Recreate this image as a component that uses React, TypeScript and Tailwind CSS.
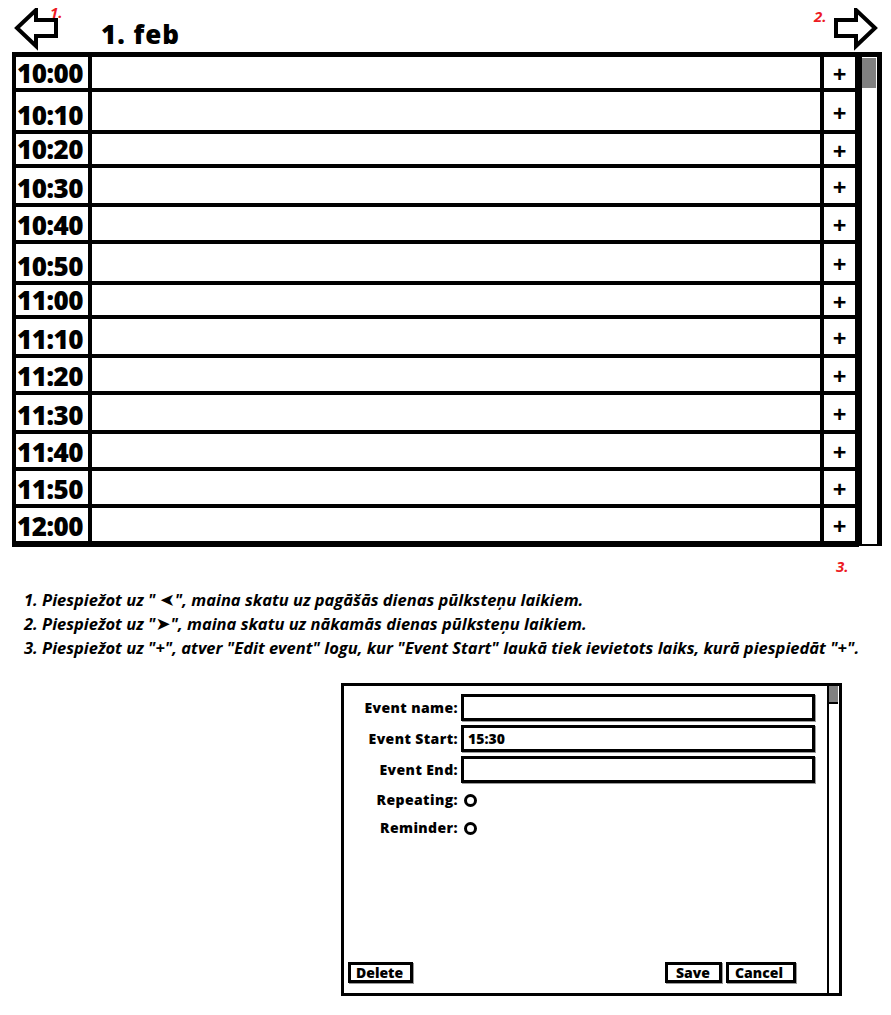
import React from 'react';

const rows: { time: string; h: string }[] = [
  { time: '10:00', h: 'h-[35px]' },
  { time: '10:10', h: 'h-[42px]' },
  { time: '10:20', h: 'h-[34px]' },
  { time: '10:30', h: 'h-[39px]' },
  { time: '10:40', h: 'h-[37px]' },
  { time: '10:50', h: 'h-[41px]' },
  { time: '11:00', h: 'h-[34px]' },
  { time: '11:10', h: 'h-[39px]' },
  { time: '11:20', h: 'h-[37px]' },
  { time: '11:30', h: 'h-[39px]' },
  { time: '11:40', h: 'h-[37px]' },
  { time: '11:50', h: 'h-[37px]' },
  { time: '12:00', h: 'h-[33px]' },
];

const sans = "font-['Open_Sans',sans-serif]";

function LeftArrow() {
  return (
    <svg width="48" height="44" viewBox="0 0 48 44" className="shrink-0">
      <polygon
        points="4,20 23,2 23,12 43,12 43,28 23,28 23,38"
        fill="white"
        stroke="black"
        strokeWidth="4"
        strokeLinejoin="miter"
      />
    </svg>
  );
}

function RightArrow() {
  return (
    <svg width="48" height="44" viewBox="0 0 48 44" className="shrink-0">
      <polygon
        points="44,20 25,2 25,12 5,12 5,28 25,28 25,38"
        fill="white"
        stroke="black"
        strokeWidth="4"
        strokeLinejoin="miter"
      />
    </svg>
  );
}

function Red({ children, className }: { children: React.ReactNode; className: string }) {
  return (
    <span className={`absolute text-[15px] font-bold italic leading-none text-[#ed1c24] ${sans} ${className}`}>
      {children}
    </span>
  );
}

function Field({ label, value }: { label: string; value?: string }) {
  return (
    <div className="flex items-center">
      <span className="w-[114px] text-right text-[14px] font-extrabold tracking-[0.4px] text-black">{label}</span>
      <div className="ml-[3px] flex h-[27px] w-[354px] items-center border-[3px] border-black pl-[4px] text-[14px] font-extrabold shadow-[1px_1px_0_#9a9a9a]">
        {value}
      </div>
    </div>
  );
}

function Radio({ label }: { label: string }) {
  return (
    <div className="flex h-[20px] items-center">
      <span className="w-[114px] text-right text-[14px] font-extrabold tracking-[0.4px] text-black">{label}</span>
      <span className="ml-[6px] mt-[2px] h-[13px] w-[13px] rounded-full border-[3px] border-black" />
    </div>
  );
}

function Btn({ label, w }: { label: string; w: string }) {
  return (
    <div className={`flex h-[21px] items-center border-[3px] border-black pl-[5px] text-[14px] font-extrabold leading-none shadow-[1px_1px_0_#9a9a9a] ${w}`}>
      {label}
    </div>
  );
}

export default function App() {
  return (
    <div className={`relative min-h-[1015px] w-[891px] bg-white text-black ${sans}`}>
      {/* header */}
      <div className="relative flex h-[52px] items-start pt-[8px]">
        <div className="ml-[13px]">
          <LeftArrow />
        </div>
        <h1 className="ml-[40px] mt-[13px] text-[26px] font-extrabold leading-none tracking-[1px]">1. feb</h1>
        <div className="ml-auto mr-[12px]">
          <RightArrow />
        </div>
        <Red className="left-[50px] top-[5px]">1.</Red>
        <Red className="left-[814px] top-[9px]">2.</Red>
      </div>

      {/* day table */}
      <div className="relative ml-[12px] flex w-[870px] items-start">
        <div className="flex-1 border-t-[5px] border-b-[6px] border-l-4 border-r-4 border-black">
          {rows.map((r, i) => (
            <div
              key={r.time}
              className={`flex ${r.h} ${i < rows.length - 1 ? 'border-b-4 border-black' : ''}`}
            >
              <div className="flex w-[76px] items-end border-r-4 border-black pb-[2px] pl-[1px] text-[26px] font-extrabold leading-none tracking-[-0.5px]">
                {r.time}
              </div>
              <div className="flex-1 border-r-4 border-black" />
              <div className="flex w-[31px] items-center justify-center pt-[3px] text-[24px] font-bold leading-none">
                +
              </div>
            </div>
          ))}
        </div>
        <div className="h-[494px] w-[23px] border-t-[5px] border-r-[5px] border-b-2 border-l-[3px] border-black">
          <div className="mt-[1px] h-[30px] w-[14px] bg-[#808080]" />
        </div>
        <Red className="left-[824px] top-[507px]">3.</Red>
      </div>

      {/* notes */}
      <div className="ml-[24px] mt-[41px] h-[72px] text-[16.5px] font-bold italic leading-[24px]">
        <p>
          1. Piespiežot uz "{' '}
          <span className="inline-block -scale-x-100 font-['DejaVu_Sans'] text-[18px] leading-none not-italic">➤</span>", maina skatu uz
          pagāšās dienas pūlksteņu laikiem.
        </p>
        <p>
          2. Piespiežot uz "<span className="font-['DejaVu_Sans'] text-[18px] leading-none not-italic">➤</span>", maina skatu uz nākamās
          dienas pūlksteņu laikiem.
        </p>
        <p>
          3. Piespiežot uz "+", atver "Edit event" logu, kur "Event Start" laukā tiek ievietots laiks, kurā
          piespiedāt "+".
        </p>
      </div>

      {/* edit event window */}
      <div className="ml-[341px] mt-[23px] flex h-[313px] w-[501px] border-[3px] border-black">
        <div className="flex flex-1 flex-col pt-[8px]">
          <div className="flex flex-col gap-[4px]">
            <Field label="Event name:" />
            <Field label="Event Start:" value="15:30" />
            <Field label="Event End:" />
          </div>
          <div className="mt-[6px] flex flex-col gap-[8px]">
            <Radio label="Repeating:" />
            <Radio label="Reminder:" />
          </div>
          <div className="mt-auto mb-[10px] flex items-center pl-[4px]">
            <Btn label="Delete" w="w-[65px]" />
            <div className="ml-auto mr-[31px] flex gap-[4px]">
              <Btn label="Save" w="w-[57px] pl-[8px]" />
              <Btn label="Cancel" w="w-[70px] pl-[6px]" />
            </div>
          </div>
        </div>
        <div className="w-[12px] border-l-2 border-black">
          <div className="h-[18px] w-[9px] border-b-2 border-black bg-[#808080]" />
        </div>
      </div>
    </div>
  );
}
